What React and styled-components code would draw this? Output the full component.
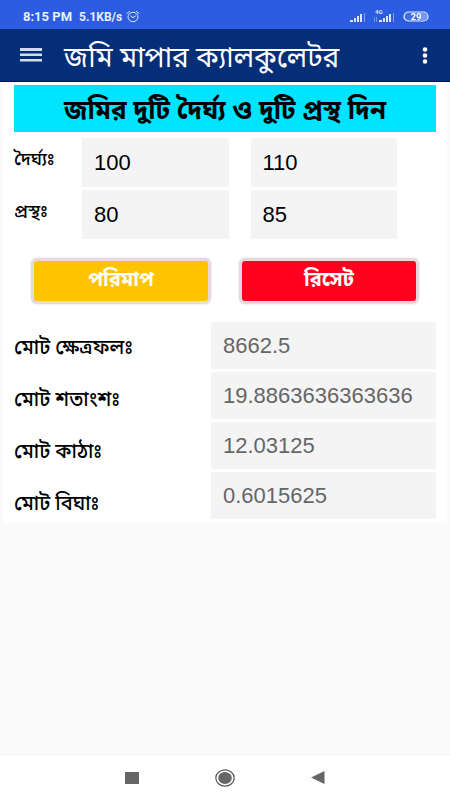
import React, { useState } from "react";
import styled, { createGlobalStyle } from "styled-components";

const GlobalStyle = createGlobalStyle`
  *, *::before, *::after { box-sizing: border-box; }
  body { margin: 0; background: #fafafa; }
  button, input { font: inherit; }
`;

const bengali = `"Noto Sans Bengali", "Noto Sans", "Liberation Sans", sans-serif`;
const numeric = `"Liberation Sans", Arial, sans-serif`;

const Screen = styled.div`
  min-height: 100vh;
  display: flex;
  flex-direction: column;
  background: #fafafa;
  color: #000;
  font-family: ${bengali};
`;

const StatusBar = styled.div`
  height: 29px;
  padding: 4px 21px 0 23px;
  display: flex;
  align-items: center;
  justify-content: space-between;
  background: #2b5ce2;
  color: #e8efff;
  font: 700 12px/16px Roboto, sans-serif;
`;

const StatusGroup = styled.div`
  display: flex;
  align-items: center;
  gap: ${(p) => p.$gap}px;
`;

const Clock = styled.span`
  font-size: 13px;
`;

const AppBar = styled.header`
  height: 53px;
  padding: 0 14px 0 20px;
  display: flex;
  align-items: center;
  background: #052e79;
  border-bottom: 1px solid #020f5c;
  color: #fff;
`;

const IconButton = styled.button`
  display: flex;
  padding: 0;
  border: 0;
  background: none;
  color: inherit;
  cursor: pointer;
`;

const Title = styled.h1`
  flex: 1;
  margin: 0 0 0 22px;
  padding-top: 10px;
  font-size: 28px;
  line-height: 44px;
  font-weight: 400;
  white-space: nowrap;
`;

const Card = styled.main`
  margin: 0 3px;
  padding: 3px 11px 4px;
  background: #fff;
`;

const Banner = styled.h2`
  margin: 0;
  height: 47px;
  padding-top: 8px;
  display: flex;
  align-items: center;
  justify-content: center;
  background: #00e5ff;
  font-size: 26px;
  line-height: 40px;
  font-weight: 700;
  white-space: nowrap;
`;

const Sizes = styled.div`
  display: grid;
  grid-template-columns: 46px 1fr 1fr;
  column-gap: 22px;
  row-gap: 3px;
  padding: 6px 39px 0 0;
`;

const SizeLabel = styled.span`
  padding-top: 8px;
  font-size: 18px;
  line-height: 28px;
  font-weight: 500;
  white-space: nowrap;
`;

const Field = styled.input`
  width: 100%;
  min-width: 0;
  height: ${(p) => p.$height}px;
  padding: 0 12px;
  border: 0;
  border-radius: 0;
  background: #f4f4f4;
  color: ${(p) => (p.readOnly ? "#666" : "#000")};
  font-family: ${numeric};
  font-size: 22px;
`;

const Actions = styled.div`
  display: grid;
  grid-template-columns: 1fr 1fr;
  gap: 28px;
  padding: 19px 17px 0;
`;

const ActionButton = styled.button`
  height: 46px;
  padding: 0;
  border: 3px solid #e8d9dc;
  border-radius: 6px;
  background: ${(p) => p.$color};
  box-shadow: 0 0 2px #d8cfd2;
  color: #fff;
  font-size: 20px;
  line-height: 32px;
  font-weight: 700;
  cursor: pointer;
`;

const Results = styled.div`
  display: grid;
  grid-template-columns: 197px 1fr;
  padding-top: 18px;
`;

const ResultNames = styled.div`
  display: flex;
  flex-direction: column;
  gap: 24px;
  padding-top: 13px;
`;

const ResultValues = styled.div`
  display: flex;
  flex-direction: column;
  gap: 3px;
`;

const ResultLabel = styled.label`
  font-size: 20px;
  line-height: 28px;
  font-weight: 500;
`;

const Spacer = styled.div`
  flex: 1;
`;

const NavBar = styled.nav`
  height: 46px;
  display: flex;
  align-items: center;
  justify-content: center;
  gap: 76px;
  background: #fff;
  border-top: 1px solid #f4f4f4;
`;

function Alarm() {
  return (
    <svg width="14" height="13" viewBox="0 0 14 13" fill="none" stroke="#dbe6ff" aria-hidden="true">
      <ellipse cx="7" cy="7" rx="5" ry="4.7" />
      <path d="M1 3.4 3.6 1.4M13 3.4 10.4 1.4M4.8 6 7 7.7 9.4 6" strokeLinecap="round" />
    </svg>
  );
}

function Signal({ lte }) {
  return (
    <svg width={lte ? 21 : 16} height="16" viewBox={lte ? "-5 0 21 16" : "0 0 16 16"} fill="#dbe6ff" aria-hidden="true">
      <path d="M0 11h3v2H0zM4 9h2v4H4zM7 7h2v6H7zM10 5h2v8h-2z" />
      <path d="M14 4h1v9h-1z" opacity=".5" />
      {lte && <path d="M-5 8h1v5h-1zM-3 8h1v5h-1z" opacity=".4" />}
      {lte && (
        <text x="-4" y="5" fontSize="6" fontWeight="700" fontFamily="Roboto, sans-serif">4G</text>
      )}
    </svg>
  );
}

function Battery() {
  return (
    <svg width="26" height="11" viewBox="0 0 26 11" aria-hidden="true">
      <rect x="1" y="1" width="24" height="9" rx="4.5" fill="#416ce5" stroke="#e8efff" strokeWidth="1.2" />
      <path d="M17 2h3.5a3.5 3.5 0 0 1 0 7H17z" fill="#7898f1" />
      <text x="13" y="8.6" textAnchor="middle" fontSize="9" fontWeight="700" fontFamily="Roboto, sans-serif" fill="#fff">29</text>
    </svg>
  );
}

const emptyValues = ["", "", "", ""];

function measure([a, b, c, d]) {
  const area = ((Number(a) + Number(b)) / 2) * ((Number(c) + Number(d)) / 2);
  return [
    String(area),
    (area / 435.6).toFixed(13),
    String(area / 720),
    String(area / 14400),
  ];
}

const resultNames = ["মোট ক্ষেত্রফলঃ", "মোট শতাংশঃ", "মোট কাঠাঃ", "মোট বিঘাঃ"];

export default function App() {
  const [sizes, setSizes] = useState(["100", "110", "80", "85"]);
  const [results, setResults] = useState(["8662.5", "19.8863636363636", "12.03125", "0.6015625"]);

  const sizeField = (index, labelId) => (
    <Field
      $height={49}
      inputMode="decimal"
      aria-labelledby={labelId}
      value={sizes[index]}
      onChange={(e) => setSizes(sizes.map((s, i) => (i === index ? e.target.value : s)))}
    />
  );

  return (
    <Screen>
      <GlobalStyle />
      <StatusBar>
        <StatusGroup $gap={4}>
          <StatusGroup $gap={7}>
            <Clock>8:15 PM</Clock>
            <span>5.1KB/s</span>
          </StatusGroup>
          <Alarm />
        </StatusGroup>
        <StatusGroup $gap={8}>
          <Signal />
          <Signal lte />
          <Battery />
        </StatusGroup>
      </StatusBar>
      <AppBar>
        <IconButton aria-label="মেনু">
          <svg width="22" height="14" viewBox="0 0 22 14" fill="#d3dcec">
            <path d="M0 0h22v3H0zM0 5.5h22v2.6H0zM0 11h22v2.6H0z" />
          </svg>
        </IconButton>
        <Title>জমি মাপার ক্যালকুলেটর</Title>
        <IconButton aria-label="আরও">
          <svg width="22" height="18" viewBox="0 0 22 18" fill="#fff">
            <circle cx="11" cy="3.5" r="2.3" />
            <circle cx="11" cy="9.5" r="2.3" />
            <circle cx="11" cy="15.5" r="2.3" />
          </svg>
        </IconButton>
      </AppBar>
      <Card>
        <Banner>জমির দুটি দৈর্ঘ্য ও দুটি প্রস্থ দিন</Banner>
        <Sizes>
          <SizeLabel id="length">দৈর্ঘ্যঃ</SizeLabel>
          {sizeField(0, "length")}
          {sizeField(1, "length")}
          <SizeLabel id="width">প্রস্থঃ</SizeLabel>
          {sizeField(2, "width")}
          {sizeField(3, "width")}
        </Sizes>
        <Actions>
          <ActionButton $color="#ffc400" onClick={() => setResults(measure(sizes))}>পরিমাপ</ActionButton>
          <ActionButton
            $color="#ff001e"
            onClick={() => {
              setSizes(emptyValues);
              setResults(emptyValues);
            }}
          >
            রিসেট
          </ActionButton>
        </Actions>
        <Results>
          <ResultNames>
            {resultNames.map((name, i) => (
              <ResultLabel key={name} htmlFor={`result-${i}`}>{name}</ResultLabel>
            ))}
          </ResultNames>
          <ResultValues>
            {results.map((value, i) => (
              <Field key={resultNames[i]} id={`result-${i}`} $height={47} readOnly value={value} />
            ))}
          </ResultValues>
        </Results>
      </Card>
      <Spacer />
      <NavBar>
        <IconButton aria-label="সাম্প্রতিক">
          <svg width="14" height="12" viewBox="0 0 14 12" fill="#666"><path d="M0 0h14v12H0z" /></svg>
        </IconButton>
        <IconButton aria-label="হোম">
          <svg width="20" height="18" viewBox="0 0 20 18">
            <ellipse cx="10" cy="9" rx="9.2" ry="8.2" fill="none" stroke="#555" strokeWidth="1.2" />
            <ellipse cx="10" cy="9" rx="6.8" ry="5.9" fill="#666" />
          </svg>
        </IconButton>
        <IconButton aria-label="পেছনে">
          <svg width="14" height="14" viewBox="0 0 14 14" fill="#666"><path d="M13.5 0v13L0 6.5z" /></svg>
        </IconButton>
      </NavBar>
    </Screen>
  );
}
